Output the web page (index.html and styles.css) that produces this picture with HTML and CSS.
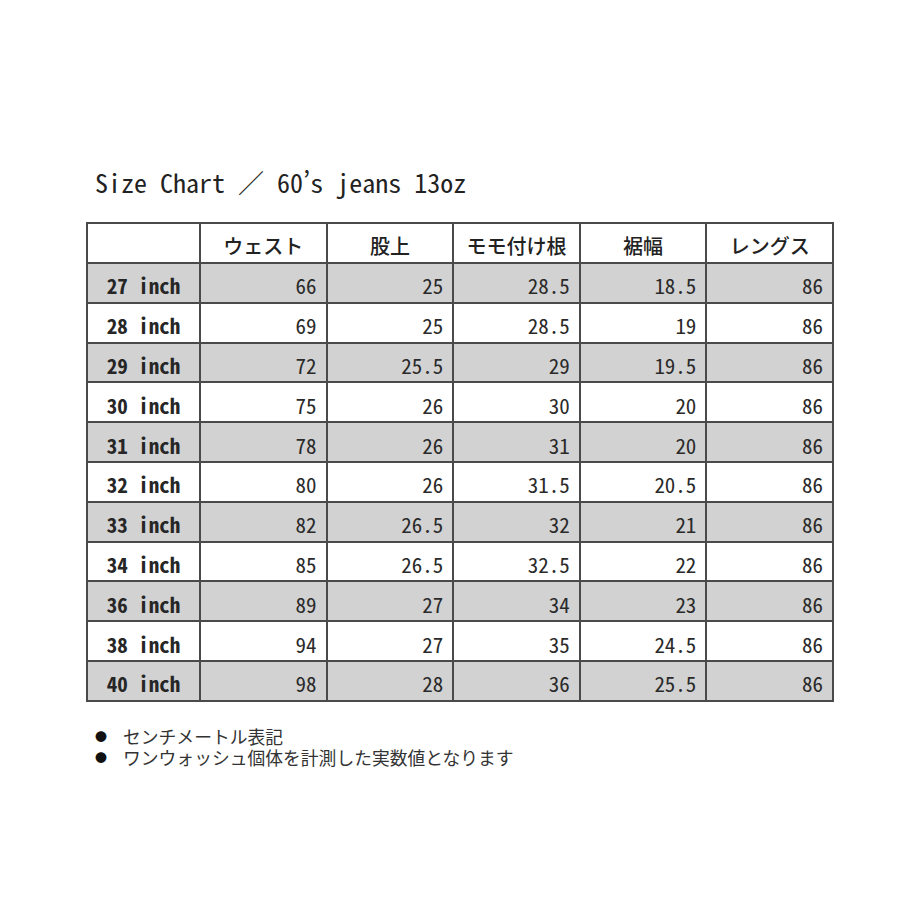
FILE: index.html
```html
<!DOCTYPE html>
<html lang="ja">
<head>
<meta charset="utf-8">
<title>Size Chart</title>
<link rel="stylesheet" href="styles.css">
</head>
<body>
<main class="page">
  <h1 class="title">Size Chart ／ 60’s jeans 13oz</h1>
  <table class="chart">
    <colgroup>
      <col class="c-label"><col class="c-val"><col class="c-val"><col class="c-val"><col class="c-val"><col class="c-val">
    </colgroup>
    <thead>
      <tr><th></th><th>ウェスト</th><th>股上</th><th>モモ付け根</th><th>裾幅</th><th>レングス</th></tr>
    </thead>
    <tbody>
      <tr class="shade"><td class="lbl">27 inch</td><td>66</td><td>25</td><td>28.5</td><td>18.5</td><td>86</td></tr>
      <tr><td class="lbl">28 inch</td><td>69</td><td>25</td><td>28.5</td><td>19</td><td>86</td></tr>
      <tr class="shade"><td class="lbl">29 inch</td><td>72</td><td>25.5</td><td>29</td><td>19.5</td><td>86</td></tr>
      <tr><td class="lbl">30 inch</td><td>75</td><td>26</td><td>30</td><td>20</td><td>86</td></tr>
      <tr class="shade"><td class="lbl">31 inch</td><td>78</td><td>26</td><td>31</td><td>20</td><td>86</td></tr>
      <tr><td class="lbl">32 inch</td><td>80</td><td>26</td><td>31.5</td><td>20.5</td><td>86</td></tr>
      <tr class="shade"><td class="lbl">33 inch</td><td>82</td><td>26.5</td><td>32</td><td>21</td><td>86</td></tr>
      <tr><td class="lbl">34 inch</td><td>85</td><td>26.5</td><td>32.5</td><td>22</td><td>86</td></tr>
      <tr class="shade"><td class="lbl">36 inch</td><td>89</td><td>27</td><td>34</td><td>23</td><td>86</td></tr>
      <tr><td class="lbl">38 inch</td><td>94</td><td>27</td><td>35</td><td>24.5</td><td>86</td></tr>
      <tr class="shade"><td class="lbl">40 inch</td><td>98</td><td>28</td><td>36</td><td>25.5</td><td>86</td></tr>
    </tbody>
  </table>
  <ul class="notes">
    <li><span class="dot">●</span><span class="note-text">センチメートル表記</span></li>
    <li><span class="dot">●</span><span class="note-text">ワンウォッシュ個体を計測した実数値となります</span></li>
  </ul>
</main>
</body>
</html>
```
FILE: styles.css
```css
html, body {
  margin: 0;
  padding: 0;
  background: #ffffff;
}

.page {
  width: 920px;
  height: 920px;
  box-sizing: border-box;
  padding: 163px 0 0 86px;
  color: #222;
}

.title {
  margin: 0 0 0 9px;
  font-family: "Noto Sans Mono CJK JP", "DejaVu Sans Mono", monospace;
  font-weight: 400;
  font-size: 26px;
  line-height: 38px;
  color: #222;
}

.chart {
  margin-top: 21px;
  border-collapse: collapse;
  table-layout: fixed;
  width: 746px;
  border: 2px solid #4a4a4a;
}

.c-label { width: 113px; }
.c-val { width: 126.6px; }

.chart th,
.chart td {
  border: 2px solid #4a4a4a;
  padding: 0;
  box-sizing: border-box;
}

.chart th {
  height: 40px;
  font-family: "Noto Sans CJK JP", sans-serif;
  font-weight: 500;
  font-size: 20px;
  line-height: 20px;
  padding-top: 5px;
  text-align: center;
  color: #222;
}

.chart td {
  height: 39.8px;
  font-family: "Noto Sans Mono CJK JP", "DejaVu Sans Mono", monospace;
  font-size: 21px;
  line-height: 21px;
  padding: 6px 9px 0 0;
  text-align: right;
  color: #2a2a2a;
}

.chart td.lbl {
  text-align: center;
  padding-right: 0;
  font-weight: 700;
  color: #262626;
}

.chart tr.shade td {
  background: #d2d2d2;
}

.notes {
  list-style: none;
  margin: 24px 0 0 9px;
  padding: 0;
  font-family: "Noto Sans CJK JP", sans-serif;
  font-weight: 400;
  font-size: 17.8px;
  line-height: 21px;
  color: #333;
}

.notes li {
  display: flex;
  align-items: center;
  gap: 16px;
  height: 21px;
}

.note-text {
  line-height: 21px;
}

.dot {
  font-size: 12px;
  line-height: 21px;
  width: 12px;
  color: #111;
}
```
